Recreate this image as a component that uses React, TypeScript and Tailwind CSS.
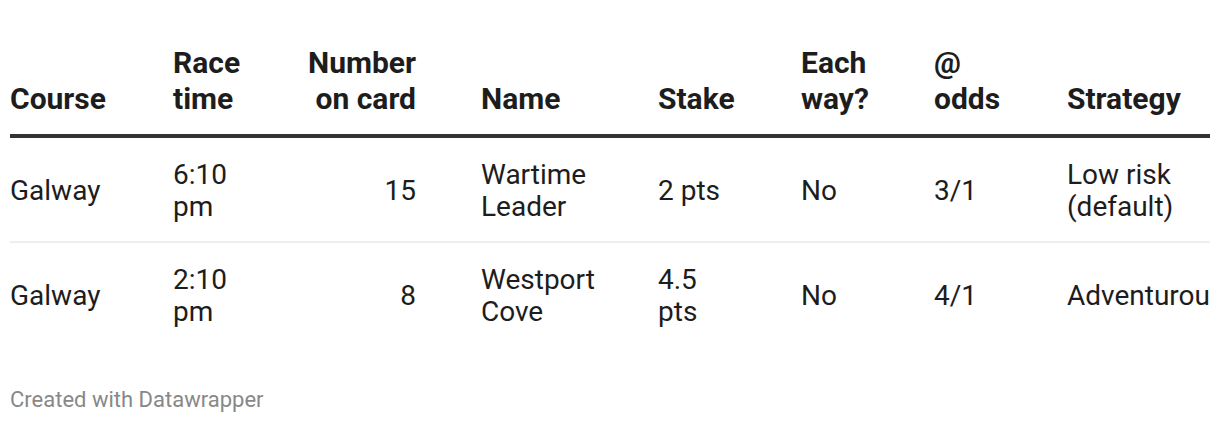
import React from "react";

const cols = [
  { w: "w-[163px] pr-[20px]", align: "" },
  { w: "w-[110px] pr-[20px]", align: "" },
  { w: "w-[198px] pr-[65px]", align: "text-right" },
  { w: "w-[177px] pr-[20px]", align: "" },
  { w: "w-[143px] pr-[68px]", align: "" },
  { w: "w-[133px] pr-[20px]", align: "" },
  { w: "w-[133px] pr-[45px]", align: "" },
  { w: "w-[143px] pr-0 overflow-hidden", align: "" },
];

const headers = ["Course", "Race time", "Number on card", "Name", "Stake", "Each way?", "@ odds", "Strategy"];

const rows = [
  ["Galway", "6:10 pm", "15", "Wartime Leader", "2 pts", "No", "3/1", "Low risk (default)"],
  ["Galway", "2:10 pm", "8", "Westport Cove", "4.5 pts", "No", "4/1", "Adventurous"],
];

export default function App() {
  return (
    <div
      className="w-[1220px] h-[424px] bg-white px-[10px] pt-[45px] text-[#1d1d1d]"
      style={{ fontFamily: "Roboto, 'Liberation Sans', sans-serif" }}
    >
      <div className="w-[1200px]">
        <div className="flex items-end border-b-[4px] border-[#333333] pb-[17px]">
          {headers.map((h, i) => (
            <div
              key={i}
              className={`${cols[i].w} ${cols[i].align} shrink-0 text-[30px] leading-[36px] font-bold`}
            >
              {h}
            </div>
          ))}
        </div>
        {rows.map((r, ri) => (
          <div
            key={ri}
            className={`flex items-center pt-[21px] pb-[18px] ${ri === 0 ? "border-b-[2px] border-[#eeeeee]" : ""}`}
          >
            {r.map((c, i) => (
              <div
                key={i}
                className={`${cols[i].w} ${cols[i].align} shrink-0 text-[28px] leading-[32px]`}
              >
                {c}
              </div>
            ))}
          </div>
        ))}
      </div>
      <div className="mt-[41px] text-[22px] leading-[26px] text-[#888888]">Created with Datawrapper</div>
    </div>
  );
}
